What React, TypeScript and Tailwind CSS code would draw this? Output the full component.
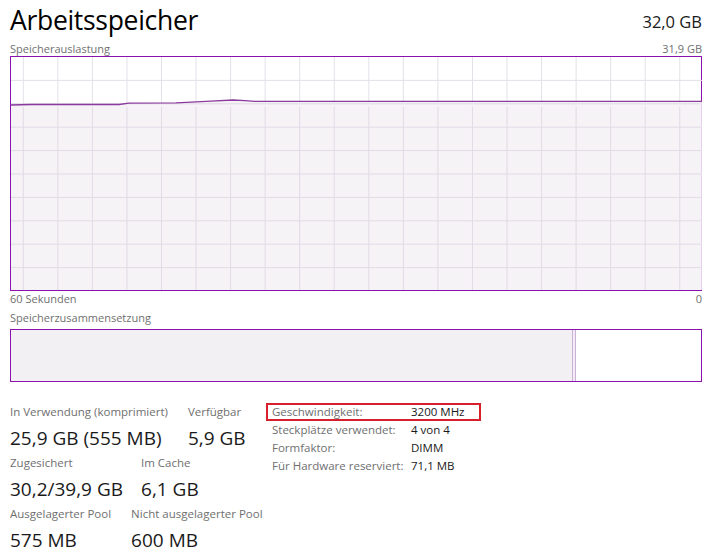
import React from "react";

const W = 691;
const H = 233;

const vLines = Array.from({ length: 20 }, (_, i) => 12.3 + i * 34.55);
const hLines = Array.from({ length: 9 }, (_, i) => (i + 1) * 23.4);

const usage =
  "M0,48 L20,47.5 L108,47.5 L118,46.2 L165,45.8 L200,44.2 L222,43 L234,43.6 L244,44.4 L691,44.4";

function UsageChart() {
  return (
    <div className="h-[235px] w-[692px] border border-[#8b12ae]">
      <svg width={W} height={H} className="block">
        {vLines.map((x) => (
          <line key={x} x1={x} y1={0} x2={x} y2={H} stroke="#e4e0e8" strokeWidth={1} />
        ))}
        {hLines.map((y) => (
          <line key={y} x1={0} y1={y} x2={W} y2={y} stroke="#e4e0e8" strokeWidth={1} />
        ))}
        <path d={`${usage} L691,${H} L0,${H} Z`} fill="#f4f1f6" fillOpacity={0.85} />
        {vLines.map((x) => (
          <line key={"f" + x} x1={x} y1={50} x2={x} y2={H} stroke="#e2dbe6" strokeWidth={1} />
        ))}
        {hLines.filter((y) => y > 46).map((y) => (
          <line key={"g" + y} x1={0} y1={y} x2={W} y2={y} stroke="#e2dbe6" strokeWidth={1} />
        ))}
        <path d={usage} fill="none" stroke="#8b3a9e" strokeWidth={1.3} />
      </svg>
    </div>
  );
}

function Stat({ label, value }: { label: string; value: string }) {
  return (
    <div className="flex flex-col">
      <span className="text-[11.5px] leading-[16px] text-[#6f6f6f]">{label}</span>
      <span className="mt-[5px] text-[19px] leading-[26px] text-[#1a1a1a]">{value}</span>
    </div>
  );
}

function Row({ label, value, boxed }: { label: string; value: string; boxed?: boolean }) {
  return (
    <div
      className={
        "flex h-[18px] items-center text-[11.5px] " +
        (boxed ? "-mx-[6px] w-[215px] border-[2.5px] border-[#d6202c] px-[4px]" : "")
      }
    >
      <span className="w-[139px] text-[#6f6f6f]">{label}</span>
      <span className="text-[#1a1a1a]">{value}</span>
    </div>
  );
}

export default function App() {
  return (
    <div
      className="h-[558px] w-[719px] overflow-hidden bg-white px-[10px] text-[#1a1a1a]"
      style={{ fontFamily: '"Open Sans", "Noto Sans", sans-serif' }}
    >
      <div className="flex h-[38px] items-end justify-between pr-[7px]">
        <h1 className="text-[26.5px] font-normal leading-[36px] tracking-[-0.3px] text-black">Arbeitsspeicher</h1>
        <span className="mb-[5px] text-[16.5px] leading-[22px]">32,0 GB</span>
      </div>
      <div className="flex h-[18px] items-end justify-between pr-[7px] text-[11px] leading-[14px] text-[#707070]">
        <span>Speicherauslastung</span>
        <span>31,9 GB</span>
      </div>
      <UsageChart />
      <div className="flex h-[17px] items-center justify-between pr-[7px] text-[11px] text-[#707070]">
        <span>60 Sekunden</span>
        <span>0</span>
      </div>
      <div className="flex h-[21px] items-center text-[11px] text-[#707070]">Speicherzusammensetzung</div>
      <div className="flex h-[53px] w-[692px] border border-[#8b12ae]">
        <div className="w-[561px] bg-[#f2f0f3]" />
        <div className="w-[4px] border-x border-[#cbb3d6] bg-[#f3eaf7]" />
        <div className="flex-1 bg-white" />
      </div>
      <div className="mt-[22px] flex">
        <div className="flex w-[262px] flex-col gap-[4px]">
          <div className="flex gap-[20px]">
            <Stat label="In Verwendung (komprimiert)" value="25,9 GB (555 MB)" />
            <Stat label="Verfügbar" value="5,9 GB" />
          </div>
          <div className="flex gap-[18px]">
            <Stat label="Zugesichert" value="30,2/39,9 GB" />
            <Stat label="Im Cache" value="6,1 GB" />
          </div>
          <div className="flex gap-[20px]">
            <Stat label="Ausgelagerter Pool" value="575 MB" />
            <Stat label="Nicht ausgelagerter Pool" value="600 MB" />
          </div>
        </div>
        <div className="-mt-[1px] flex w-[210px] flex-col">
          <Row label="Geschwindigkeit:" value="3200 MHz" boxed />
          <Row label="Steckplätze verwendet:" value="4 von 4" />
          <Row label="Formfaktor:" value="DIMM" />
          <Row label="Für Hardware reserviert:" value="71,1 MB" />
        </div>
      </div>
    </div>
  );
}
